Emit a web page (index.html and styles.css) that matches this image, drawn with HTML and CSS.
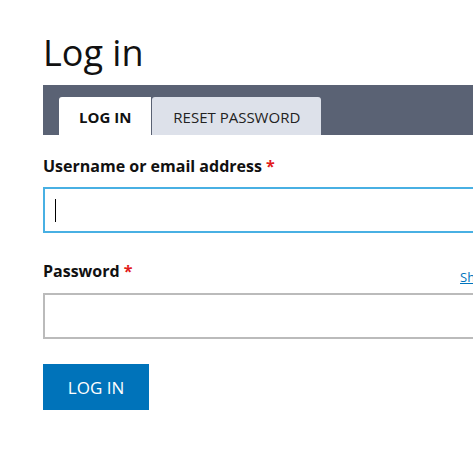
FILE: index.html
```html
<!DOCTYPE html>
<html lang="en">
<head>
<meta charset="utf-8">
<title>Log in</title>
<link rel="stylesheet" href="styles.css">
</head>
<body>
<main class="page">
  <h1 class="title">Log in</h1>
  <nav class="tabs">
    <a class="tab tab-active" href="#">LOG IN</a>
    <a class="tab" href="#">RESET PASSWORD</a>
  </nav>
  <form class="form">
    <div class="field">
      <label class="label" for="name">Username or email address <span class="req">*</span></label>
      <div class="input-wrap">
        <input class="input input-focus" id="name" type="text">
        <span class="caret"></span>
      </div>
    </div>
    <div class="field">
      <div class="label-row">
        <label class="label" for="pass">Password <span class="req">*</span></label>
        <a class="show" href="#">Show</a>
      </div>
      <input class="input" id="pass" type="password">
    </div>
    <button class="btn" type="button">LOG IN</button>
  </form>
</main>
</body>
</html>
```
FILE: styles.css
```css
html, body {
  margin: 0;
  padding: 0;
  overflow: hidden;
  background: #fff;
}
body {
  font-family: "Open Sans", "DejaVu Sans", sans-serif;
  color: #111;
}
.page {
  padding: 31px 0 0 43px;
  width: 450px;
}
.title {
  margin: 0 0 10px;
  font-size: 36px;
  font-weight: 400;
  line-height: 44px;
}
.tabs {
  display: flex;
  align-items: flex-end;
  height: 50px;
  background: #5a6274;
  padding-left: 16px;
  gap: 1px;
}
.tab {
  display: block;
  height: 38px;
  line-height: 40px;
  font-size: 15px;
  text-decoration: none;
  color: #222;
  background: #dde1ea;
  border-radius: 3px 3px 0 0;
  padding: 0 21px;
}
.tab-active {
  background: #fff;
  font-weight: 700;
  color: #111;
  padding: 0 20px;
  border-radius: 3px 0 0 0;
}
.form {
  padding-top: 20px;
}
.field + .field {
  margin-top: 27px;
}
.label {
  display: block;
  font-size: 16px;
  font-weight: 700;
  line-height: 22px;
  margin-bottom: 10px;
}
.req {
  color: #e21b1b;
}
.label-row {
  display: flex;
  justify-content: space-between;
  align-items: flex-end;
}
.label-row .label {
  margin-bottom: 11px;
}
.show {
  font-size: 13px;
  line-height: 18px;
  color: #0074bd;
  margin-bottom: 7px;
}
.input-wrap {
  position: relative;
}
.caret {
  position: absolute;
  left: 12px;
  top: 12px;
  width: 1px;
  height: 23px;
  background: #000;
}
.input {
  display: block;
  box-sizing: border-box;
  width: 100%;
  height: 46px;
  border: 2px solid #bbb;
  border-radius: 0;
  outline: none;
  padding: 0 10px;
  font: inherit;
  background: #fff;
}
.input-focus {
  border-color: #48b0e3;
}
.btn {
  display: block;
  width: 106px;
  height: 46px;
  border: 0;
  border-radius: 0;
  background: #0073ba;
  color: #fff;
  font-family: inherit;
  font-size: 17px;
  margin-top: 25px;
  padding: 0;
}
```
